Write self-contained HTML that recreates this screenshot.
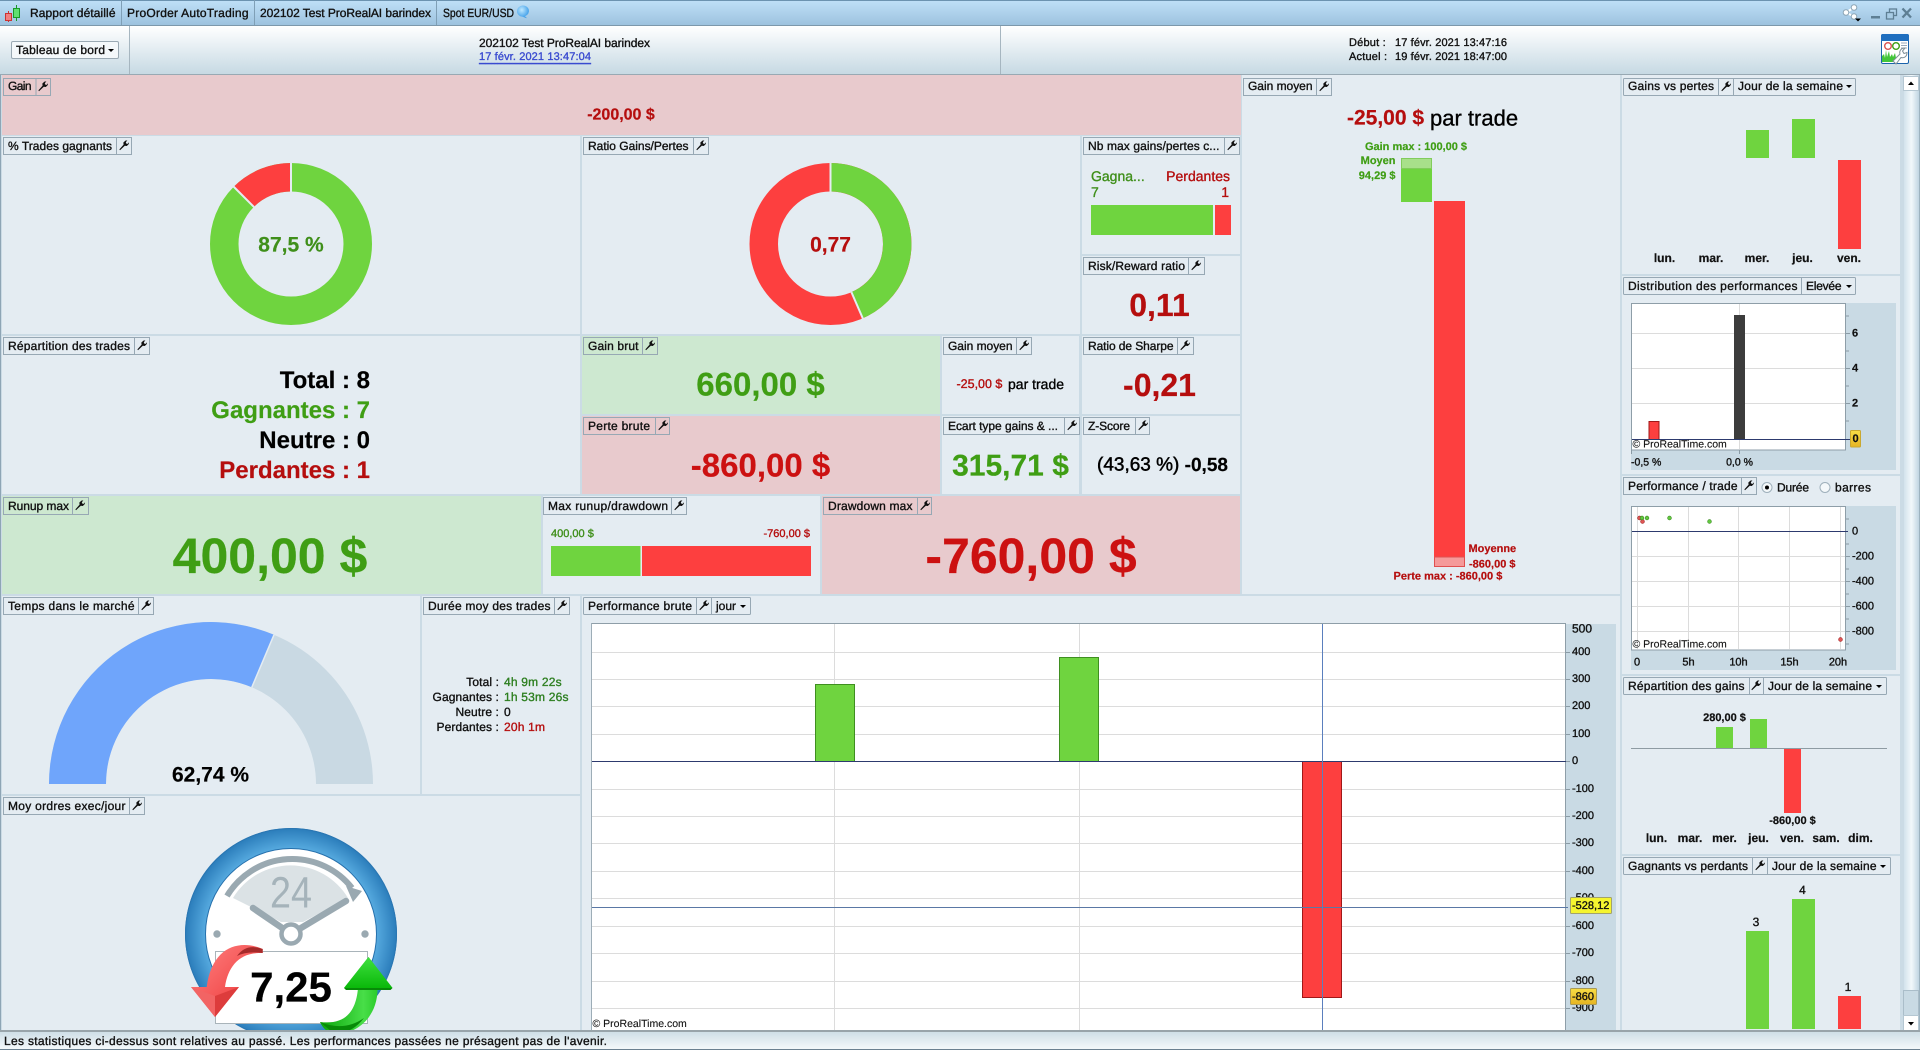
<!DOCTYPE html>
<html lang="fr"><head><meta charset="utf-8"><title>Rapport détaillé</title>
<style>
html,body{margin:0;padding:0;background:#cbdbe5;overflow:hidden}
svg{display:block;position:absolute;left:0;top:0;filter:blur(.3px)}
text{font-family:"Liberation Sans",Arial,sans-serif;font-size:12px;dominant-baseline:central;fill:currentColor;stroke:currentColor;stroke-width:.35px;color:#111;text-rendering:geometricPrecision}
.b{font-weight:bold;stroke-width:.2px}.m{text-anchor:middle}.e{text-anchor:end}
.g{color:#3f9e14}.r{color:#b50e0e}.R{color:#cc1111}.k{color:#000}
.f11{font-size:11px}.f10{font-size:10.5px}
.tag rect{fill:none;stroke:#97a8b4;stroke-width:1}
.tag line{stroke:#97a8b4;stroke-width:1}
.gl line{stroke:#dcdcdc;stroke-width:1}
.tk line{stroke:#8a9ba5;stroke-width:1}
</style></head><body>
<svg width="1920" height="1050" viewBox="0 0 1920 1050" xmlns="http://www.w3.org/2000/svg">
<defs>
<linearGradient id="gTop" x1="0" y1="0" x2="0" y2="1"><stop offset="0" stop-color="#bfe0f7"/><stop offset="1" stop-color="#9dc2de"/></linearGradient>
<linearGradient id="gHead" x1="0" y1="0" x2="0" y2="1"><stop offset="0" stop-color="#ffffff"/><stop offset="1" stop-color="#c6d9e3"/></linearGradient>
<linearGradient id="gStat" x1="0" y1="0" x2="0" y2="1"><stop offset="0" stop-color="#cfdfe7"/><stop offset="1" stop-color="#f3f8fa"/></linearGradient>
<linearGradient id="gScr" x1="0" y1="0" x2="1" y2="0"><stop offset="0" stop-color="#d3e3ec"/><stop offset=".5" stop-color="#f2f8fb"/><stop offset="1" stop-color="#c0d5e2"/></linearGradient>
<linearGradient id="gGold" x1="0" y1="0" x2="0" y2="1"><stop offset="0" stop-color="#f7dd45"/><stop offset="1" stop-color="#e6b422"/></linearGradient>
<radialGradient id="gRing" gradientUnits="userSpaceOnUse" cx="291" cy="934" r="106"><stop offset=".78" stop-color="#5cb0e4"/><stop offset="1" stop-color="#2a7cba"/></radialGradient>
<linearGradient id="gRed" x1="0" y1="0" x2="1" y2="1"><stop offset="0" stop-color="#ff8484"/><stop offset=".6" stop-color="#f35050"/><stop offset="1" stop-color="#e04040"/></linearGradient>
<linearGradient id="gGrn" x1="0" y1="0" x2="1" y2="0"><stop offset="0" stop-color="#0aa50a"/><stop offset=".6" stop-color="#48de48"/><stop offset="1" stop-color="#0cb80c"/></linearGradient>
<linearGradient id="gGrnH" x1="0" y1="0" x2="0" y2="1"><stop offset="0" stop-color="#3fe03f"/><stop offset="1" stop-color="#0ab80a"/></linearGradient>
<radialGradient id="gBub" cx=".4" cy=".35" r=".7"><stop offset="0" stop-color="#bfe8ff"/><stop offset="1" stop-color="#2f95e6"/></radialGradient>
<symbol id="wr" viewBox="0 0 10 11" width="10" height="11"><path d="M1 10.2 L0.4 9.4 L4.6 4.6 L4.3 2.6 L6.4 .6 L8.4 .4 L6.8 2.2 L7.3 3.6 L8.7 3.9 L9.8 2.2 L9.8 4 L7.8 6 L5.8 5.7 Z" fill="#111"/></symbol>
</defs>

<!-- title bar -->
<rect x="0" y="0" width="1920" height="25" fill="url(#gTop)"/>
<rect x="0" y="0" width="1920" height="1" fill="#6c93b0"/>
<rect x="0" y="25" width="1920" height="1" fill="#7d98ab"/>
<g stroke="#7f9fb6"><line x1="121.5" y1="0" x2="121.5" y2="25"/><line x1="254.5" y1="0" x2="254.5" y2="25"/><line x1="436.5" y1="0" x2="436.5" y2="25"/></g>
<line x1="8.5" y1="11" x2="8.5" y2="22" stroke="#c33"/><rect x="5.5" y="13.5" width="6" height="7" fill="#f08080" stroke="#c33"/>
<line x1="16.5" y1="5" x2="16.5" y2="21" stroke="#1a9a2a"/><rect x="13.5" y="8.5" width="6" height="9" fill="#60e070" stroke="#1a9a2a"/>
<text x="30" y="13" textLength="85.5">Rapport détaillé</text>
<text x="127" y="13" textLength="121.5">ProOrder AutoTrading</text>
<text x="260" y="13" textLength="171">202102 Test ProRealAI barindex</text>
<text x="443" y="13" textLength="71" lengthAdjust="spacingAndGlyphs">Spot EUR/USD</text>
<path d="M517 12a6 5.5 0 1 1 8 5.2l2 2-4.5-1.4A6 5.5 0 0 1 517 12z" fill="url(#gBub)" transform="translate(0 -1)"/>
<!-- window controls -->
<g stroke="#fff" stroke-width="2" fill="none"><line x1="1854" y1="7.5" x2="1846" y2="12.5"/><line x1="1846" y1="12.5" x2="1854" y2="16.5"/></g>
<circle cx="1854" cy="7.5" r="2.8" fill="#fff" stroke="#8da5b5"/><circle cx="1846" cy="12.5" r="2.8" fill="#fff" stroke="#8da5b5"/><circle cx="1854" cy="16.5" r="2.8" fill="#fff" stroke="#8da5b5"/>
<path d="M1855 18.5h6l-3 3z" fill="#000"/>
<rect x="1871" y="16" width="9" height="2.5" fill="#5e7f94"/>
<rect x="1889.5" y="9" width="7" height="6.5" fill="none" stroke="#5e7f94" stroke-width="1.3"/><rect x="1886.5" y="12.5" width="7" height="6.5" fill="#a8cce5" stroke="#5e7f94" stroke-width="1.3"/>
<path d="M1902.5 8.5l8.5 9m0-9l-8.5 9" stroke="#5e7f94" stroke-width="2.3" fill="none"/>

<!-- header -->
<rect x="0" y="26" width="1920" height="48" fill="url(#gHead)"/>
<rect x="0" y="74" width="1920" height="1" fill="#98a9b3"/>
<line x1="129.5" y1="26" x2="129.5" y2="74" stroke="#a6b6c0"/><line x1="1000.5" y1="26" x2="1000.5" y2="74" stroke="#a6b6c0"/>
<rect x="11.5" y="41.5" width="107" height="17" rx="1.5" fill="#f4f8fa" stroke="#9aa9b3"/>
<text x="16" y="50" textLength="89">Tableau de bord</text><path d="M108 49h6l-3 3z" fill="#000"/>
<text x="479" y="43" textLength="171">202102 Test ProRealAI barindex</text>
<text x="479" y="57" class="f11" style="color:#3a4bd0" text-decoration="underline" textLength="112">17 févr. 2021 13:47:04</text>
<text x="1349" y="43" class="f11" letter-spacing=".2">Début :</text><text x="1395" y="43" class="f11" textLength="112">17 févr. 2021 13:47:16</text>
<text x="1349" y="57" class="f11" letter-spacing=".2">Actuel :</text><text x="1395" y="57" class="f11" textLength="112">19 févr. 2021 18:47:00</text>
<!-- dashboard icon -->
<rect x="1881.5" y="34.5" width="27" height="29" rx="1.5" fill="#fff" stroke="#1b63ab"/>
<path d="M1881 41v-5q0-2 2-2h24q2 0 2 2v5z" fill="#1f6fbf"/>
<circle cx="1888" cy="46" r="3.3" fill="none" stroke="#d9534f" stroke-width="1.4"/><circle cx="1896" cy="46" r="3.3" fill="none" stroke="#3f9e14" stroke-width="1.4"/>
<path d="M1901 43h6M1901 45.5h6M1901 48h6" stroke="#9ab" stroke-width="1"/>
<path d="M1882 62v-6l2-2 1 4 1-8 1 7 2-6 1 6 2-3 1 3 2-4 1 5 1-2v6z" fill="#43c63a"/>
<path d="M1896 64l-3-3 7-7c-1-3 1-6 5-6l-2.5 3 1.5 2.5 3-1c0 4-3 6-6 5z" fill="#fff" stroke="#7f8f98" stroke-width="1"/>

<!-- panels -->
<rect x="0" y="75" width="1904" height="957" fill="#cbdbe5"/>
<rect x="0" y="75" width="1" height="957" fill="#8ea5b5"/>
<g fill="#e4ecf2">
<rect x="2" y="136" width="578" height="198"/>
<rect x="582" y="136" width="498" height="198"/>
<rect x="1082" y="136" width="158" height="118"/>
<rect x="1082" y="256" width="158" height="78"/>
<rect x="2" y="336" width="578" height="158"/>
<rect x="942" y="336" width="137" height="78"/>
<rect x="1082" y="336" width="158" height="78"/>
<rect x="942" y="416" width="137" height="78"/>
<rect x="1082" y="416" width="158" height="78"/>
<rect x="543" y="496" width="277" height="98"/>
<rect x="2" y="596" width="418" height="198"/>
<rect x="422" y="596" width="158" height="198"/>
<rect x="2" y="796" width="578" height="235"/>
<rect x="582" y="596" width="1038" height="435"/>
<rect x="1242" y="75" width="378" height="519"/>
<rect x="1622" y="75" width="278" height="199"/>
<rect x="1622" y="276" width="278" height="198"/>
<rect x="1622" y="476" width="278" height="198"/>
<rect x="1622" y="676" width="278" height="178"/>
<rect x="1622" y="856" width="278" height="175"/>
</g>
<g fill="#e8cacd"><rect x="2" y="75" width="1239" height="60"/><rect x="582" y="416" width="358" height="78"/><rect x="822" y="496" width="418" height="98"/></g>
<g fill="#cde8d0"><rect x="582" y="336" width="358" height="78"/><rect x="2" y="496" width="539" height="98"/></g>

<!-- scrollbar -->
<rect x="1904" y="75" width="15" height="957" fill="url(#gScr)"/>
<rect x="1919" y="75" width="1" height="957" fill="#9db3c0"/>
<rect x="1903.5" y="76.5" width="15" height="14" fill="#fff" stroke="#b5c7d2"/><path d="M1908 85h6l-3-3.5z" fill="#000"/>
<rect x="1903.5" y="990.5" width="15" height="25" fill="#c9dae4" stroke="#aabdc9"/>
<rect x="1903.5" y="1015.5" width="15" height="15" fill="#fff" stroke="#b5c7d2"/><path d="M1908 1022h6l-3 3.5z" fill="#000"/>

<!-- tags -->
<g class="tag"><rect x="3.5" y="78.5" width="47" height="17"/><line x1="36" y1="78" x2="36" y2="95"/><text x="8" y="86" textLength="23.5">Gain</text><use href="#wr" x="38" y="81"/></g>
<g class="tag"><rect x="3.5" y="137.5" width="128" height="17"/><line x1="116.5" y1="137" x2="116.5" y2="154"/><text x="8" y="146" textLength="104">% Trades gagnants</text><use href="#wr" x="119" y="140"/></g>
<g class="tag"><rect x="583.5" y="137.5" width="125" height="17"/><line x1="693.5" y1="137" x2="693.5" y2="154"/><text x="588" y="146" textLength="100.5">Ratio Gains/Pertes</text><use href="#wr" x="696" y="140"/></g>
<g class="tag"><rect x="1083.5" y="137.5" width="156" height="17"/><line x1="1224.5" y1="137" x2="1224.5" y2="154"/><text x="1088" y="146" textLength="131.5">Nb max gains/pertes c...</text><use href="#wr" x="1227" y="140"/></g>
<g class="tag"><rect x="1083.5" y="257.5" width="121" height="17"/><line x1="1188.5" y1="257" x2="1188.5" y2="274"/><text x="1088" y="266" textLength="97">Risk/Reward ratio</text><use href="#wr" x="1191" y="260"/></g>
<g class="tag"><rect x="3.5" y="337.5" width="146" height="17"/><line x1="134.5" y1="337" x2="134.5" y2="354"/><text x="8" y="346" textLength="122">Répartition des trades</text><use href="#wr" x="137" y="340"/></g>
<g class="tag"><rect x="583.5" y="337.5" width="74" height="17"/><line x1="642.5" y1="337" x2="642.5" y2="354"/><text x="588" y="346" textLength="50.5">Gain brut</text><use href="#wr" x="645" y="340"/></g>
<g class="tag"><rect x="943.5" y="337.5" width="88" height="17"/><line x1="1016.5" y1="337" x2="1016.5" y2="354"/><text x="948" y="346" textLength="64.5">Gain moyen</text><use href="#wr" x="1019" y="340"/></g>
<g class="tag"><rect x="1083.5" y="337.5" width="110" height="17"/><line x1="1177.5" y1="337" x2="1177.5" y2="354"/><text x="1088" y="346" textLength="85.5">Ratio de Sharpe</text><use href="#wr" x="1180" y="340"/></g>
<g class="tag"><rect x="583.5" y="417.5" width="86" height="17"/><line x1="655.5" y1="417" x2="655.5" y2="434"/><text x="588" y="426" textLength="62">Perte brute</text><use href="#wr" x="658" y="420"/></g>
<g class="tag"><rect x="943.5" y="417.5" width="136" height="17"/><line x1="1064.5" y1="417" x2="1064.5" y2="434"/><text x="948" y="426" textLength="110">Ecart type gains &amp; ...</text><use href="#wr" x="1067" y="420"/></g>
<g class="tag"><rect x="1083.5" y="417.5" width="66" height="17"/><line x1="1135.5" y1="417" x2="1135.5" y2="434"/><text x="1088" y="426" textLength="42">Z-Score</text><use href="#wr" x="1138" y="420"/></g>
<g class="tag"><rect x="3.5" y="497.5" width="85" height="17"/><line x1="72.5" y1="497" x2="72.5" y2="514"/><text x="8" y="506" textLength="61">Runup max</text><use href="#wr" x="75" y="500"/></g>
<g class="tag"><rect x="543.5" y="497.5" width="143" height="17"/><line x1="671.5" y1="497" x2="671.5" y2="514"/><text x="548" y="506" textLength="120">Max runup/drawdown</text><use href="#wr" x="674" y="500"/></g>
<g class="tag"><rect x="823.5" y="497.5" width="108" height="17"/><line x1="917.5" y1="497" x2="917.5" y2="514"/><text x="828" y="506" textLength="84.5">Drawdown max</text><use href="#wr" x="920" y="500"/></g>
<g class="tag"><rect x="3.5" y="597.5" width="150" height="17"/><line x1="138.5" y1="597" x2="138.5" y2="614"/><text x="8" y="606" textLength="126.5">Temps dans le marché</text><use href="#wr" x="141" y="600"/></g>
<g class="tag"><rect x="423.5" y="597.5" width="146" height="17"/><line x1="554.5" y1="597" x2="554.5" y2="614"/><text x="428" y="606" textLength="122.5">Durée moy des trades</text><use href="#wr" x="557" y="600"/></g>
<g class="tag"><rect x="583.5" y="597.5" width="167" height="17" rx="1"/><line x1="696.5" y1="597" x2="696.5" y2="614"/><line x1="711.5" y1="597" x2="711.5" y2="614"/><text x="588" y="606" textLength="104">Performance brute</text><use href="#wr" x="699" y="600"/><text x="716" y="606">jour</text><path d="M740 605h6l-3 3z" fill="#000"/></g>
<g class="tag"><rect x="1243.5" y="78.5" width="88" height="17"/><line x1="1316.5" y1="78" x2="1316.5" y2="95"/><text x="1248" y="86" textLength="64.5">Gain moyen</text><use href="#wr" x="1319" y="81"/></g>
<g class="tag"><rect x="1623.5" y="78.5" width="232" height="17" rx="1"/><line x1="1718.5" y1="78" x2="1718.5" y2="95"/><line x1="1733.5" y1="78" x2="1733.5" y2="95"/><text x="1628" y="86" textLength="86">Gains vs pertes</text><use href="#wr" x="1721" y="81"/><text x="1738" y="86" textLength="105">Jour de la semaine</text><path d="M1846 85h6l-3 3z" fill="#000"/></g>
<g class="tag"><rect x="1623.5" y="277.5" width="232" height="17" rx="1"/><line x1="1801.5" y1="277" x2="1801.5" y2="294"/><text x="1628" y="286" textLength="169.5">Distribution des performances</text><text x="1806" y="286" textLength="35.5">Elevée</text><path d="M1846 285h6l-3 3z" fill="#000"/></g>
<g class="tag"><rect x="1623.5" y="477.5" width="133" height="17"/><line x1="1741.5" y1="477" x2="1741.5" y2="494"/><text x="1628" y="486" textLength="109.5">Performance / trade</text><use href="#wr" x="1744" y="480"/></g>
<g class="tag"><rect x="1623.5" y="677.5" width="263" height="17" rx="1"/><line x1="1749.5" y1="677" x2="1749.5" y2="694"/><line x1="1763.5" y1="677" x2="1763.5" y2="694"/><text x="1628" y="686" textLength="116.5">Répartition des gains</text><use href="#wr" x="1751" y="680"/><text x="1768" y="686" textLength="104">Jour de la semaine</text><path d="M1876 685h6l-3 3z" fill="#000"/></g>
<g class="tag"><rect x="1623.5" y="857.5" width="267" height="17" rx="1"/><line x1="1752.5" y1="857" x2="1752.5" y2="874"/><line x1="1767.5" y1="857" x2="1767.5" y2="874"/><text x="1628" y="866" textLength="120">Gagnants vs perdants</text><use href="#wr" x="1755" y="860"/><text x="1772" y="866" textLength="104.5">Jour de la semaine</text><path d="M1880 865h6l-3 3z" fill="#000"/></g>
<g class="tag"><rect x="3.5" y="797.5" width="141" height="17"/><line x1="129.5" y1="797" x2="129.5" y2="814"/><text x="8" y="806" textLength="117.5">Moy ordres exec/jour</text><use href="#wr" x="132" y="800"/></g>

<!-- big values -->
<text x="621" y="115" class="b m r" style="font-size:16px">-200,00 $</text>

<!-- donut 1 -->
<circle cx="291" cy="244" r="66.75" fill="none" stroke="#6fd43f" stroke-width="28.5"/>
<path d="M243.8 196.8A66.75 66.75 0 0 1 291 177.25" fill="none" stroke="#fd3f3f" stroke-width="28.5"/>
<path d="M291 162v30M253.9 206.9L233 186" stroke="#e4ecf2" stroke-width="2" fill="none"/>
<text x="291" y="245" class="b m g" style="font-size:21px;color:#3f8f1a">87,5 %</text>
<!-- donut 2 -->
<circle cx="830.5" cy="244" r="66.75" fill="none" stroke="#fd3f3f" stroke-width="28.5"/>
<path d="M830.5 177.25A66.75 66.75 0 0 1 857.1 305.2" fill="none" stroke="#6fd43f" stroke-width="28.5"/>
<path d="M830.5 162v30M851.4 292.1L863.3 319.5" stroke="#e4ecf2" stroke-width="2" fill="none"/>
<text x="830.5" y="245" class="b m r" style="font-size:21px">0,77</text>

<!-- nb max -->
<text x="1091" y="176" class="g" style="font-size:14px;color:#3f8f1a">Gagna...</text>
<text x="1230" y="176" class="e r" style="font-size:14px">Perdantes</text>
<text x="1091" y="192" class="g" style="font-size:14px;color:#3f8f1a">7</text>
<text x="1229" y="192" class="e r" style="font-size:14px">1</text>
<rect x="1091" y="205" width="122" height="30" fill="#6fd43f"/><rect x="1215" y="205" width="16" height="30" fill="#fd3f3f"/>

<text x="1159.5" y="305" class="b m r" style="font-size:32px">0,11</text>

<!-- répartition -->
<text x="370" y="380.5" class="b e k" style="font-size:24px">Total : 8</text>
<text x="370" y="410.5" class="b e g" style="font-size:24px">Gagnantes : 7</text>
<text x="370" y="440.5" class="b e k" style="font-size:24px">Neutre : 0</text>
<text x="370" y="470.5" class="b e r" style="font-size:24px">Perdantes : 1</text>

<text x="760.5" y="384" class="b m g" style="font-size:33px">660,00 $</text>
<text x="760.5" y="465" class="b m R" style="font-size:33px">-860,00 $</text>
<text x="956.5" y="384" class="r" style="font-size:12.5px">-25,00 $</text><text x="1008" y="384" class="k" style="font-size:14px">par trade</text>
<text x="1159.5" y="385" class="b m r" style="font-size:32px">-0,21</text>
<text x="1010.5" y="466" class="b m g" style="font-size:30px">315,71 $</text>
<text x="1097" y="465" class="k" style="font-size:19px;stroke-width:.5px">(43,63 %) <tspan class="b">-0,58</tspan></text>

<text x="270" y="556" class="b m g" style="font-size:50px">400,00 $</text>
<text x="1031" y="556" class="b m R" style="font-size:50px">-760,00 $</text>
<text x="551" y="534" class="f11 g" style="color:#3f8f1a">400,00 $</text>
<text x="810" y="534" class="f11 e r">-760,00 $</text>
<rect x="551" y="546" width="89.5" height="30" fill="#6fd43f"/><rect x="642" y="546" width="169" height="30" fill="#fd3f3f"/>

<!-- temps gauge -->
<path d="M49 784A162 162 0 0 1 373 784L316 784A105 105 0 0 0 106 784Z" fill="#c9d9e3"/>
<path d="M49 784A162 162 0 0 1 274 634.8L251.8 687.3A105 105 0 0 0 106 784Z" fill="#6fa5fb"/>
<line x1="251.8" y1="687.3" x2="274" y2="634.8" stroke="#e4ecf2" stroke-width="1.5"/>
<text x="210.5" y="775" class="b m k" style="font-size:21px">62,74 %</text>

<!-- durée -->
<g>
<text x="499" y="682" class="e" letter-spacing=".1">Total :</text><text x="504" y="682" style="color:#2d7f20" letter-spacing=".2">4h 9m 22s</text>
<text x="499" y="697" class="e" letter-spacing=".1">Gagnantes :</text><text x="504" y="697" style="color:#2d7f20" letter-spacing=".2">1h 53m 26s</text>
<text x="499" y="712" class="e" letter-spacing=".1">Neutre :</text><text x="504" y="712">0</text>
<text x="499" y="727" class="e" letter-spacing=".1">Perdantes :</text><text x="504" y="727" class="r" letter-spacing=".2">20h 1m</text>
</g>

<!-- clock -->
<circle cx="291" cy="934" r="106" fill="url(#gRing)"/>
<circle cx="291" cy="934" r="105.5" fill="none" stroke="#2a76b2"/>
<circle cx="291" cy="934" r="85.5" fill="#fff" stroke="#2670ac"/>
<path d="M233 898A67 67 0 0 1 348 898L303 922H281Z" fill="#dbe2e5"/>
<text x="270" y="893" textLength="42" lengthAdjust="spacingAndGlyphs" style="font-size:44px;color:#a5b3ba;stroke-width:0">24</text>
<path d="M227 896A76 76 0 0 1 352 888" fill="none" stroke="#9aa9b1" stroke-width="6"/>
<path d="M346 886L362 891L353 902Z" fill="#9aa9b1"/>
<path d="M253 908L291 934L346 901" fill="none" stroke="#9aa9b1" stroke-width="6.5" stroke-linecap="round" stroke-linejoin="round"/>
<circle cx="291" cy="934" r="9.5" fill="#fff" stroke="#9aa9b1" stroke-width="4.5"/>
<circle cx="217" cy="934" r="3.7" fill="#9aa9b1"/><circle cx="365" cy="934" r="3.7" fill="#9aa9b1"/>
<rect x="215.5" y="951.5" width="152" height="72" fill="#fff" stroke="#a9b4ba"/>
<text x="291" y="987" class="b m k" style="font-size:42px">7,25</text>
<path d="M262.7 949C240 939 212 946 206.7 987H191L215 1017L239 987H225C228 966 240 952 262.7 953Z" fill="url(#gRed)"/>
<path d="M215 1017L215 996L239 987Z" fill="#dd3c3c"/>
<path d="M215 1017L215 996L191 987Z" fill="#f26464"/>
<path d="M262.7 949Q246 943 237 956Q247 951 262.7 953Z" fill="#a52a2a"/>
<path d="M320 1022C345 1025 356 1012 358 988H344L368.5 957L392.5 988H377.5C378 1016 358 1034 336 1034Q325 1033 320 1022Z" fill="url(#gGrn)"/>
<path d="M320 1022Q344 1032 364 1018Q350 1036 332 1032Z" fill="#078a07"/>
<path d="M344 988L368.5 957L392.5 988Z" fill="url(#gGrnH)"/>
<path d="M344 988h48.5l-2 2h-44.5z" fill="#078a07"/>

<!-- Gain moyen chart -->
<text x="1347" y="118" class="b r" style="font-size:21px">-25,00 $</text>
<text x="1430" y="118" class="k" style="font-size:22px">par trade</text>
<text x="1416" y="147" class="b m f11 g">Gain max : 100,00 $</text>
<text x="1395.5" y="161" class="b e f11 g">Moyen</text>
<text x="1395.5" y="176" class="b e f11 g">94,29 $</text>
<rect x="1401" y="158" width="31" height="44" fill="#6fd43f"/>
<rect x="1401.5" y="158.5" width="30" height="10" fill="#a8e08a" stroke="#82cc5c"/>
<rect x="1434" y="201" width="31" height="366" fill="#fd3f3f"/>
<rect x="1434.5" y="557" width="30" height="9.5" fill="#f59a9a" stroke="#e05050"/>
<text x="1468.5" y="549" class="b f11 r">Moyenne</text>
<text x="1469" y="564.5" class="b f11 r">-860,00 $</text>
<text x="1393.5" y="576.5" class="b f11 r">Perte max : -860,00 $</text>

<!-- gains vs pertes -->
<rect x="1746" y="130" width="23" height="28" fill="#6fd43f"/><rect x="1792" y="119" width="23" height="39" fill="#6fd43f"/><rect x="1838" y="160" width="23" height="89" fill="#fd3f3f"/>
<text x="1664.5" y="258" class="b m">lun.</text><text x="1711" y="258" class="b m">mar.</text><text x="1757" y="258" class="b m">mer.</text><text x="1802.5" y="258" class="b m">jeu.</text><text x="1849" y="258" class="b m">ven.</text>

<!-- distribution -->
<rect x="1631" y="303" width="265" height="167" fill="#c9dae4"/>
<rect x="1631.5" y="303.5" width="214" height="146.5" fill="#fff" stroke="#8e9ea8"/>
<g class="gl"><line x1="1632" y1="333.5" x2="1845" y2="333.5"/><line x1="1632" y1="368.5" x2="1845" y2="368.5"/><line x1="1632" y1="403.5" x2="1845" y2="403.5"/><line x1="1739.5" y1="304" x2="1739.5" y2="449"/></g>
<rect x="1734" y="315" width="11" height="124" fill="#3c3c3c"/>
<rect x="1649" y="421.5" width="10" height="18" fill="#fd3f3f" stroke="#a01818"/>
<line x1="1632" y1="439.5" x2="1850" y2="439.5" stroke="#2d3a6e"/>
<g class="tk"><line x1="1846" y1="316" x2="1849" y2="316"/><line x1="1846" y1="333.5" x2="1850" y2="333.5"/><line x1="1846" y1="351" x2="1849" y2="351"/><line x1="1846" y1="368.5" x2="1850" y2="368.5"/><line x1="1846" y1="386" x2="1849" y2="386"/><line x1="1846" y1="403.5" x2="1850" y2="403.5"/><line x1="1846" y1="421" x2="1849" y2="421"/><line x1="1631.5" y1="450" x2="1631.5" y2="454"/><line x1="1739.5" y1="450" x2="1739.5" y2="454"/></g>
<text x="1855" y="333.5" class="m b f11">6</text><text x="1855" y="368.5" class="m b f11">4</text><text x="1855" y="403.5" class="m b f11">2</text>
<rect x="1850.5" y="430.5" width="10" height="16.5" rx="1" fill="url(#gGold)" stroke="#c9a830"/>
<text x="1855.5" y="439" class="m b f11">0</text>
<text x="1632.5" y="444.5" class="f10" style="stroke-width:.1px">© ProRealTime.com</text>
<text x="1631" y="462.5" class="f10">-0,5 %</text><text x="1739.5" y="462.5" class="m f10">0,0 %</text>

<!-- performance / trade -->
<circle cx="1767" cy="487.5" r="5" fill="#f4f8fa" stroke="#9fb0bb"/><circle cx="1767" cy="487.5" r="2" fill="#000"/>
<text x="1777" y="487.5" textLength="32">Durée</text>
<circle cx="1825" cy="487.5" r="5" fill="#f4f8fa" stroke="#9fb0bb"/>
<text x="1835" y="487.5" textLength="36">barres</text>
<rect x="1631" y="506" width="265" height="164" fill="#c9dae4"/>
<rect x="1631.5" y="506.5" width="214" height="143.5" fill="#fff" stroke="#8e9ea8"/>
<g class="gl"><line x1="1632" y1="556.5" x2="1845" y2="556.5"/><line x1="1632" y1="581.5" x2="1845" y2="581.5"/><line x1="1632" y1="606.5" x2="1845" y2="606.5"/><line x1="1632" y1="631.5" x2="1845" y2="631.5"/><line x1="1637.5" y1="507" x2="1637.5" y2="649"/><line x1="1688.5" y1="507" x2="1688.5" y2="649"/><line x1="1738.5" y1="507" x2="1738.5" y2="649"/><line x1="1789.5" y1="507" x2="1789.5" y2="649"/><line x1="1840.5" y1="507" x2="1840.5" y2="649"/></g>
<line x1="1632" y1="531.5" x2="1848" y2="531.5" stroke="#2d3a6e"/>
<g fill="#e05555" stroke="#a02020" stroke-width=".6"><circle cx="1639.5" cy="518" r="1.9"/><circle cx="1642.5" cy="521.5" r="1.9"/><circle cx="1840.5" cy="639.5" r="1.9"/></g>
<g fill="#62c840" stroke="#3a8a20" stroke-width=".6"><circle cx="1642" cy="518" r="1.9"/><circle cx="1647" cy="518" r="1.9"/><circle cx="1669.5" cy="518" r="1.9"/><circle cx="1709.5" cy="521.5" r="1.9"/></g>
<g class="tk"><line x1="1846" y1="519" x2="1849" y2="519"/><line x1="1846" y1="544" x2="1849" y2="544"/><line x1="1846" y1="556.5" x2="1850" y2="556.5"/><line x1="1846" y1="569" x2="1849" y2="569"/><line x1="1846" y1="581.5" x2="1850" y2="581.5"/><line x1="1846" y1="594" x2="1849" y2="594"/><line x1="1846" y1="606.5" x2="1850" y2="606.5"/><line x1="1846" y1="619" x2="1849" y2="619"/><line x1="1846" y1="631.5" x2="1850" y2="631.5"/><line x1="1846" y1="644" x2="1849" y2="644"/></g>
<text x="1852" y="531.5" class="f11">0</text><text x="1852" y="556.5" class="f11">-200</text><text x="1852" y="581.5" class="f11">-400</text><text x="1852" y="606.5" class="f11">-600</text><text x="1852" y="631.5" class="f11">-800</text>
<text x="1632.5" y="644.5" class="f10" style="stroke-width:.1px">© ProRealTime.com</text>
<text x="1637" y="662.5" class="m f11">0</text><text x="1688.5" y="662.5" class="m f11">5h</text><text x="1738.5" y="662.5" class="m f11">10h</text><text x="1789.5" y="662.5" class="m f11">15h</text><text x="1838" y="662.5" class="m f11">20h</text>

<!-- répartition des gains -->
<rect x="1716" y="727" width="17" height="21" fill="#6fd43f"/><rect x="1750" y="719" width="17" height="29" fill="#6fd43f"/><rect x="1784" y="748" width="17" height="65" fill="#fd3f3f"/>
<line x1="1631" y1="748.5" x2="1887" y2="748.5" stroke="#8e9ba3"/>
<text x="1724.5" y="718" class="m f11 b">280,00 $</text><text x="1792.5" y="821" class="m f11 b">-860,00 $</text>
<text x="1656.5" y="838" class="m b">lun.</text><text x="1690" y="838" class="m b">mar.</text><text x="1724.5" y="838" class="m b">mer.</text><text x="1758.5" y="838" class="m b">jeu.</text><text x="1792" y="838" class="m b">ven.</text><text x="1826" y="838" class="m b">sam.</text><text x="1860.5" y="838" class="m b">dim.</text>

<!-- gagnants vs perdants -->
<rect x="1746" y="931" width="23" height="98" fill="#6fd43f"/><rect x="1792" y="899" width="23" height="130" fill="#6fd43f"/><rect x="1838" y="996" width="23" height="33" fill="#fd3f3f"/>
<text x="1756" y="922" class="m">3</text><text x="1802.5" y="890" class="m">4</text><text x="1848" y="987" class="m">1</text>

<!-- performance brute -->
<rect x="1566" y="624" width="50" height="407" fill="#c9dae4"/>
<rect x="591" y="623" width="975" height="408" fill="#fff"/>
<line x1="591" y1="623.5" x2="1566" y2="623.5" stroke="#8e9ea8"/>
<line x1="591.5" y1="623" x2="591.5" y2="1031" stroke="#9dadb7"/>
<line x1="1565.5" y1="623" x2="1565.5" y2="1031" stroke="#8e9ea8"/>
<g class="gl">
<line x1="592" y1="652.5" x2="1565" y2="652.5"/><line x1="592" y1="679.5" x2="1565" y2="679.5"/><line x1="592" y1="706.5" x2="1565" y2="706.5"/><line x1="592" y1="734.5" x2="1565" y2="734.5"/><line x1="592" y1="789.5" x2="1565" y2="789.5"/><line x1="592" y1="816.5" x2="1565" y2="816.5"/><line x1="592" y1="843.5" x2="1565" y2="843.5"/><line x1="592" y1="871.5" x2="1565" y2="871.5"/><line x1="592" y1="898.5" x2="1565" y2="898.5"/><line x1="592" y1="926.5" x2="1565" y2="926.5"/><line x1="592" y1="953.5" x2="1565" y2="953.5"/><line x1="592" y1="981.5" x2="1565" y2="981.5"/><line x1="592" y1="1008.5" x2="1565" y2="1008.5"/>
<line x1="834.5" y1="624" x2="834.5" y2="1031"/><line x1="1079.5" y1="624" x2="1079.5" y2="1031"/>
</g>
<rect x="815.5" y="684.5" width="39" height="77" fill="#6fd43f" stroke="#3f8f20"/>
<rect x="1059.5" y="657.5" width="39" height="104" fill="#6fd43f" stroke="#3f8f20"/>
<rect x="1302.5" y="761.5" width="39" height="236" fill="#fd3f3f" stroke="#a01818"/>
<line x1="592" y1="761.5" x2="1568" y2="761.5" stroke="#2d3a6e"/>
<line x1="592" y1="907.5" x2="1568" y2="907.5" stroke="#5a78a5"/>
<line x1="1322.5" y1="624" x2="1322.5" y2="1031" stroke="#5a7fbd"/>
<g class="tk"><line x1="1566" y1="652.5" x2="1570" y2="652.5"/><line x1="1566" y1="679.5" x2="1570" y2="679.5"/><line x1="1566" y1="706.5" x2="1570" y2="706.5"/><line x1="1566" y1="734.5" x2="1570" y2="734.5"/><line x1="1566" y1="761.5" x2="1570" y2="761.5"/><line x1="1566" y1="789.5" x2="1570" y2="789.5"/><line x1="1566" y1="816.5" x2="1570" y2="816.5"/><line x1="1566" y1="843.5" x2="1570" y2="843.5"/><line x1="1566" y1="871.5" x2="1570" y2="871.5"/><line x1="1566" y1="926.5" x2="1570" y2="926.5"/><line x1="1566" y1="953.5" x2="1570" y2="953.5"/><line x1="1566" y1="981.5" x2="1570" y2="981.5"/><line x1="1566" y1="1008.5" x2="1570" y2="1008.5"/></g>
<text x="1572" y="628.5">500</text>
<text x="1572" y="652" class="f11">400</text><text x="1572" y="679" class="f11">300</text><text x="1572" y="706" class="f11">200</text><text x="1572" y="734" class="f11">100</text><text x="1572" y="761" class="f11">0</text>
<text x="1572" y="789" class="f11">-100</text><text x="1572" y="816" class="f11">-200</text><text x="1572" y="843" class="f11">-300</text><text x="1572" y="871" class="f11">-400</text><text x="1572" y="898" class="f11">-500</text><text x="1572" y="926" class="f11">-600</text><text x="1572" y="953" class="f11">-700</text><text x="1572" y="981" class="f11">-800</text><text x="1572" y="1008" class="f11">-900</text>
<rect x="1570.5" y="897.5" width="41" height="16" rx="1" fill="#f5f52f" stroke="#a3a36a"/>
<text x="1572" y="906" class="f11">-528,12</text>
<rect x="1570.5" y="988.5" width="26" height="16" rx="1" fill="url(#gGold)" stroke="#a99a55"/>
<text x="1572" y="997" class="f11">-860</text>
<text x="592.5" y="1024" class="f10" style="stroke-width:.1px">© ProRealTime.com</text>

<!-- status bar -->
<rect x="0" y="1030" width="1920" height="2" fill="#98a4aa"/>
<rect x="0" y="1032" width="1920" height="17" fill="url(#gStat)"/>
<rect x="0" y="1049" width="1920" height="1" fill="#6a8090"/>
<text x="4" y="1041" textLength="603">Les statistiques ci-dessus sont relatives au passé. Les performances passées ne présagent pas de l'avenir.</text>
</svg>
</body></html>
